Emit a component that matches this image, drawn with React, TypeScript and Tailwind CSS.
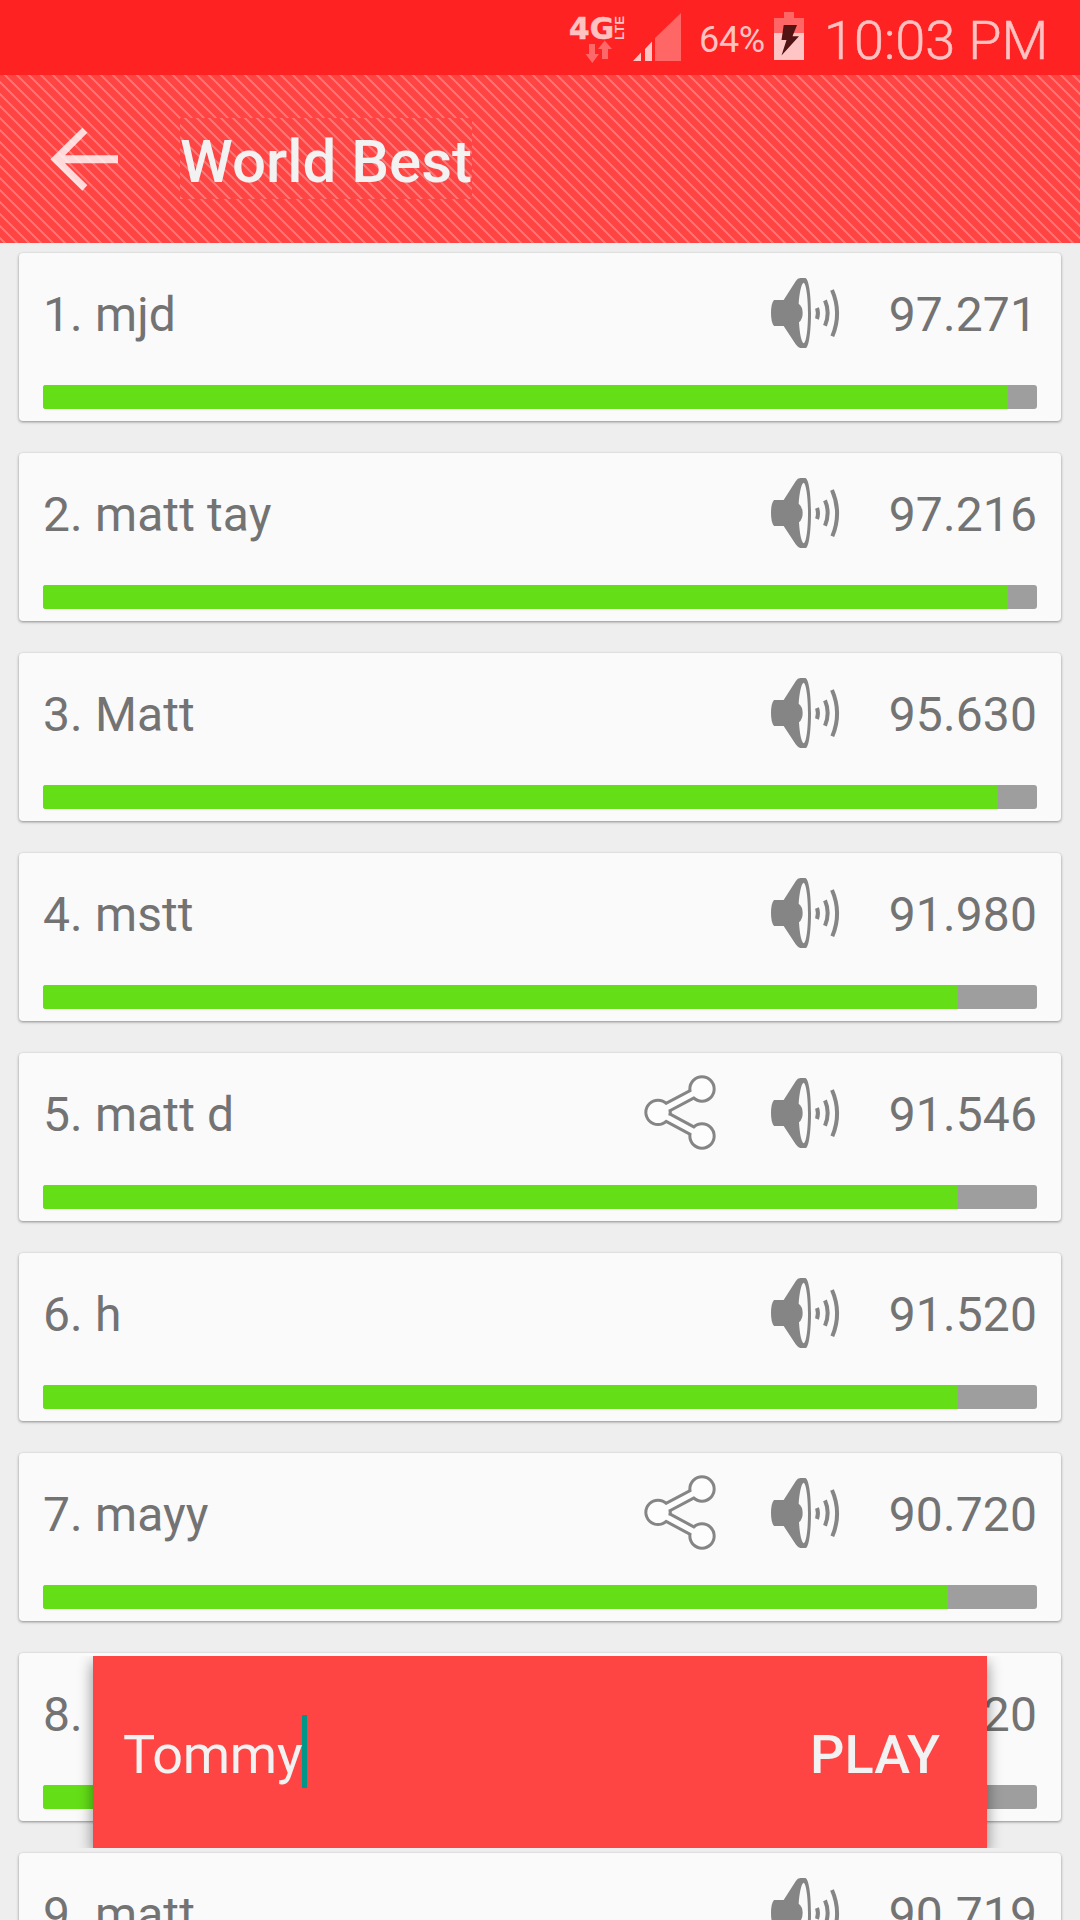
const scores = [
  { name: 'mjd', score: '97.271', percent: 97.1 },
  { name: 'matt tay', score: '97.216', percent: 97.1 },
  { name: 'Matt', score: '95.630', percent: 96.1 },
  { name: 'mstt', score: '91.980', percent: 92.05 },
  { name: 'matt d', score: '91.546', percent: 92.05, shared: true },
  { name: 'h', score: '91.520', percent: 92.05 },
  { name: 'mayy', score: '90.720', percent: 91.05, shared: true },
  { name: 'matt', score: '90.720', percent: 91.05 },
  { name: 'matt', score: '90.719', percent: 91.05 },
];

function NetworkIcon() {
  return (
    <svg className="h-[75px] w-[60px]" viewBox="568 0 60 75">
      <text x="569" y="39" textLength="45" lengthAdjust="spacingAndGlyphs" fontFamily="DejaVu Sans" fontWeight="bold" fontSize="30" fill="#ffc2c2" stroke="#ffc2c2" strokeWidth="0.5">4G</text>
      <text transform="translate(624 40) rotate(-90)" textLength="24" lengthAdjust="spacingAndGlyphs" fontFamily="Liberation Sans" fontWeight="bold" fontSize="13" fill="#ffc2c2">LTE</text>
      <path d="M589 44h6v10h4l-6.700 9-6.700-9h3.400zM602 59v-10h-4l6.700-8.500 7.300 8.500h-4v10z" fill="#ff6868" />
    </svg>
  );
}

function SignalIcon() {
  return (
    <svg className="h-[75px] w-[50px]" viewBox="632 0 50 75">
      <path d="M681 13v48h-26V38z" fill="#ff6666" />
      <path d="M633 61l8-8.500V61zM645 61V49l7-7.500V61z" fill="#ffc4c4" />
    </svg>
  );
}

function BatteryIcon() {
  return (
    <svg className="h-[75px] w-[30px]" viewBox="774 0 30 75">
      <path d="M784 12h10v6h10v16h-30V18h10z" fill="#ff6666" />
      <path d="M774 33h30v27h-30z" fill="#ffc4c4" />
      <path d="M783.700 25H797l-4.500 11.200h6.500L781.500 55.500l5-15.500h-5z" fill="#511313" />
    </svg>
  );
}

function SpeakerIcon() {
  return (
    <svg className="h-[85px] w-[90px]" viewBox="0 0 270 255" fill="none">
      <path fillRule="evenodd" fill="#858585" d="M42 90H71L107 34Q113 24 121 24H136C146 26 153 70 153 129S146 231 138 234H121Q113 232 107 223L71 168H42Q33 158 33 129T42 90ZM131 38C124 40 118 70 116 101Q128 110 128 129T117 157C119 190 124 216 131 220C139 217 144 178 144 129S138 41 131 38Z" />
      <g stroke="#858585" strokeWidth="12">
        <path d="M171 114Q177 130 171 147" />
        <path d="M195 91Q211 128 195 167" />
        <path d="M216 60Q246 129 217 199" />
      </g>
    </svg>
  );
}

function ShareIcon() {
  return (
    <svg className="mt-[2px] h-[80px] w-[76px]" viewBox="66 66 228 240">
      <g fill="#858585" stroke="#858585" strokeWidth="12">
        <path d="M246 117L114 187L246 258" fill="none" strokeWidth="34" />
        <circle cx="114" cy="187" r="35" />
        <circle cx="246" cy="117" r="35" />
        <circle cx="246" cy="258" r="35" />
      </g>
      <g fill="#fdfdfd">
        <path d="M246 117L114 187L246 258" fill="none" stroke="#fdfdfd" strokeWidth="16" />
        <path d="M146 178L154 183V192L146 197z" fill="#858585" />
        <circle cx="114" cy="187" r="32" />
        <circle cx="246" cy="117" r="32" />
        <circle cx="246" cy="258" r="32" />
      </g>
    </svg>
  );
}

function ScoreCard({ rank, name, score, percent, shared }: { rank: number; name: string; score: string; percent: number; shared?: boolean }) {
  return (
    <li className="flex h-[168px] shrink-0 flex-col rounded-[4px] bg-[#fafafa] px-6 shadow-[0_1px_3px_rgba(0,0,0,0.42)]">
      <div className="flex h-[132px] shrink-0 items-start text-[48px] leading-[56px] tracking-[0.12px] text-[#737373]">
        <span className="mt-[34px] flex-1 whitespace-pre">{rank}. {name}</span>
        <div className="mt-[17px] flex">
          {shared && <div className="mr-[42px]"><ShareIcon /></div>}
          <SpeakerIcon />
        </div>
        <span className="mt-[34px] w-[187px] text-right">{score}</span>
      </div>
      <div className="h-6 shrink-0 overflow-hidden rounded-[3px] bg-[#9e9e9e]">
        <div className="h-full bg-[#64df17]" style={{ width: `${percent}%` }} />
      </div>
    </li>
  );
}

export default function App() {
  return (
    <div className="relative flex h-[1920px] w-[1080px] flex-col overflow-hidden bg-[#eeeeee] font-['Roboto',sans-serif]">
      <div className="flex h-[75px] shrink-0 items-center justify-end bg-[#ff2222] pr-[33px] text-[#ffc2c2]">
        <NetworkIcon />
        <div className="ml-1"><SignalIcon /></div>
        <span className="ml-[17px] mt-[5px] w-[75px] text-[36px] leading-[42px] tracking-[-0.3px]">64%</span>
        <BatteryIcon />
        <span className="ml-[20px] mr-[3px] mt-[6px] w-[220px] whitespace-nowrap text-[54px] font-light leading-[64px] [-webkit-text-stroke:0.5px_#ffc2c2]">10:03 PM</span>
      </div>

      <header className="flex h-[168px] shrink-0 items-start bg-[#ff4444] bg-[repeating-linear-gradient(45deg,transparent_0%,transparent_12%,#ff7575_17%,#ff7575_24%,transparent_29%,transparent_50%)] bg-[length:12px_12px]">
        <svg className="ml-[48px] mt-[48px] h-[72px] w-[72px]" viewBox="144 158 216 216">
          <path d="M247 172L262 187L195 255H354V279H195L262 345L247 361L151 267Z" fill="#ffffff" fillOpacity="0.8" />
        </svg>
        <h1 className="ml-[60px] mt-[43px] h-[81px] w-[292px] whitespace-nowrap bg-[#ff4444] bg-[repeating-linear-gradient(45deg,transparent_0%,transparent_12%,#ff7575_17%,#ff7575_24%,transparent_29%,transparent_50%)] bg-[length:12px_12px] text-[60px] font-medium leading-[87px] text-[#f2f2f2]">World Best</h1>
      </header>

      <ul className="flex flex-col gap-8 px-[19px] pt-[10px]">
        {scores.map((s, i) => (
          <ScoreCard key={i} rank={i + 1} {...s} />
        ))}
      </ul>

      <div className="absolute left-[93px] top-[1656px] flex h-[192px] w-[894px] items-center justify-between bg-[#ff4444] pl-[30px] pr-[47px] text-[54px] leading-[64px] text-[#f2f2f2] shadow-[0_6px_14px_rgba(0,0,0,0.45)] [clip-path:inset(0_-20px)]">
        <div className="flex items-center">
          <span className="mt-[6px] tracking-[-0.3px]">Tommy</span>
          <span className="mt-[-1px] h-[73px] w-[5px] bg-[#009688]" />
        </div>
        <button className="mt-[6px] font-medium">PLAY</button>
      </div>
    </div>
  );
}
